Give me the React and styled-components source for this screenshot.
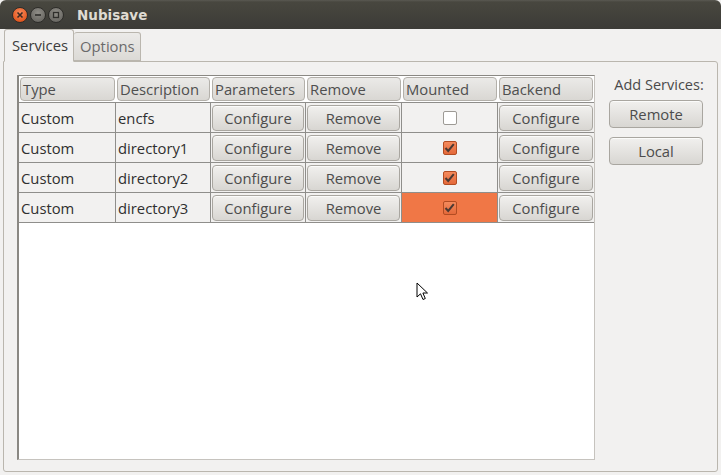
import React from 'react';
import styled, { createGlobalStyle } from 'styled-components';

const GlobalStyle = createGlobalStyle`
    html, body {
        margin: 0;
        padding: 0;
        background: #f2f1f0;
    }
    body {
        font-family: "Open Sans", "DejaVu Sans", sans-serif;
        font-size: 14.8px;
        color: #3c3c3c;
    }
`;

const rows = [
    { type: 'Custom', description: 'encfs', mounted: false },
    { type: 'Custom', description: 'directory1', mounted: true },
    { type: 'Custom', description: 'directory2', mounted: true },
    { type: 'Custom', description: 'directory3', mounted: true, selected: true },
];

const columns = ['Type', 'Description', 'Parameters', 'Remove', 'Mounted', 'Backend'];
const colTemplate = '97px 95px 95px 96px 96px 96px';

const Window = styled.div`
    width: 721px;
    height: 475px;
    display: flex;
    flex-direction: column;
    background: #f2f1f0;
    position: relative;
    overflow: hidden;
`;

const TitleBar = styled.div`
    height: 29px;
    flex: none;
    display: flex;
    align-items: center;
    padding-left: 12px;
    background: linear-gradient(#5a5952 0px, #48473f 2px, #3c3b37 100%);
    border-top-right-radius: 6px;
    border-top-left-radius: 6px;
`;

const Controls = styled.div`
    display: flex;
    gap: 2px;
    margin-right: 13px;
`;

const Circle = styled.div`
    width: 16px;
    height: 16px;
    border-radius: 50%;
    display: flex;
    align-items: center;
    justify-content: center;
    box-sizing: border-box;
    border: 1px solid #2e2d2a;
    background: ${p => (p.close
        ? 'radial-gradient(circle at 50% 35%, #f88a5c, #e35a22 70%, #c2441a)'
        : 'radial-gradient(circle at 50% 35%, #8f8d87, #6d6b66 70%, #5a5954)')};
`;

const Title = styled.div`
    font-family: "DejaVu Sans", sans-serif;
    font-weight: bold;
    font-size: 13.5px;
    color: #dfdbd2;
`;

const Body = styled.div`
    flex: 1;
    display: flex;
    flex-direction: column;
    padding: 1px 3px 3px 3px;
`;

const TabStrip = styled.div`
    display: flex;
    align-items: flex-end;
    padding-left: 1px;
    height: 32px;
    margin-bottom: -1px;
    position: relative;
    z-index: 1;
`;

const Tab = styled.div`
    box-sizing: border-box;
    height: ${p => (p.active ? '33px' : '29px')};
    padding: ${p => (p.active ? '5px 5px 0 7px' : '3px 5px 0 6px')};
    border: 1px solid #bab6ae;
    border-bottom: ${p => (p.active ? '1px solid #f2f1f0' : '1px solid #bab6ae')};
    border-left: ${p => (p.active ? '1px solid #bab6ae' : 'none')};
    border-radius: 3px 3px 0 0;
    background: ${p => (p.active ? '#f2f1f0' : 'linear-gradient(#ebeae8, #dcdad6)')};
    color: ${p => (p.active ? '#3c3c3c' : '#6a6a6a')};
    margin-bottom: ${p => (p.active ? '0' : '1px')};
`;

const Panel = styled.div`
    flex: 1;
    box-sizing: border-box;
    border: 1px solid #bab6ae;
    border-radius: 0 3px 3px 3px;
    display: flex;
    padding: 13px 13px 11px 13px;
    gap: 14px;
`;

const ScrollPane = styled.div`
    width: 578px;
    box-sizing: border-box;
    background: #ffffff;
    border: 1px solid #c6c3be;
    border-top-color: #8a8883;
    border-left: 2px solid #8a8883;
    padding: 1px 0 0 0;
`;

const HeaderRow = styled.div`
    display: grid;
    grid-template-columns: ${colTemplate};
    height: 25px;
`;

const HeaderCell = styled.div`
    margin: 0 1px;
    box-sizing: border-box;
    border: 1px solid #b3b0aa;
    border-radius: 4px;
    background: linear-gradient(#ebeae8, #d9d7d3);
    color: #4f4f4f;
    padding-left: 2px;
    line-height: 22px;
    height: 24px;
    white-space: nowrap;
    overflow: hidden;
`;

const Row = styled.div`
    display: grid;
    grid-template-columns: ${colTemplate};
    width: 575px;
    border-top: 1px solid #8f8e8b;
    border-bottom: ${p => (p.last ? '1px solid #8f8e8b' : 'none')};
    height: 29px;
    background: #f2f1f0;
`;

const Cell = styled.div`
    box-sizing: border-box;
    border-right: 1px solid #8f8e8b;
    display: flex;
    align-items: center;
    justify-content: ${p => (p.center ? 'center' : 'flex-start')};
    padding: ${p => (p.button ? '1px 1px' : '0 0 0 2px')};
    background: ${p => (p.selected ? '#f07746' : 'transparent')};
    color: #2f2f2f;
    &:last-child {
        border-right: none;
    }
`;

const Button = styled.div`
    flex: ${p => (p.fixed ? 'none' : '1')};
    box-sizing: border-box;
    height: ${p => (p.fixed ? '28px' : '26px')};
    display: flex;
    align-items: center;
    justify-content: center;
    border: 1px solid #a9a6a0;
    border-radius: 4px;
    background: linear-gradient(#f1f0ee, #d8d6d2);
    color: #4c4c4c;
    box-shadow: inset 0 1px 0 #fbfbfa;
`;

const CheckBox = styled.div`
    width: 14px;
    height: 14px;
    margin-right: 2px;
    box-sizing: border-box;
    border-radius: 2px;
    border: 1px solid ${p => (p.checked ? '#b24c22' : '#9d9a95')};
    background: ${p => (p.checked ? 'linear-gradient(#f48a5c, #e4693a)' : '#ffffff')};
    display: flex;
    align-items: center;
    justify-content: center;
`;

const Side = styled.div`
    width: 94px;
    display: flex;
    flex-direction: column;
    align-items: stretch;
`;

const SideLabel = styled.div`
    display: flex;
    justify-content: center;
    white-space: nowrap;
    color: #4a4a4a;
    height: 25px;
    line-height: 20px;
    margin: 0 -6px 0 0;
    font-size: 14.5px;
`;

const SideButtons = styled.div`
    display: flex;
    flex-direction: column;
    gap: 9px;
`;

const Cursor = styled.svg`
    position: absolute;
    left: 416px;
    top: 282px;
`;

const Check = () => (
    <svg width="11" height="10" viewBox="0 0 11 10">
        <path d="M1.5 5 L4.2 8 L9.8 1.2" fill="none" stroke="#4b3a34" strokeWidth="2" />
    </svg>
);

const App = () => {
    return (
        <Window>
            <GlobalStyle />
            <TitleBar>
                <Controls>
                    <Circle close>
                        <svg width="8" height="8" viewBox="0 0 8 8">
                            <path d="M1.5 1.5 L6.5 6.5 M6.5 1.5 L1.5 6.5" stroke="#3b2a22" strokeWidth="1.6" />
                        </svg>
                    </Circle>
                    <Circle>
                        <svg width="8" height="8" viewBox="0 0 8 8">
                            <path d="M1 4 L7 4" stroke="#2f2e2b" strokeWidth="1.6" />
                        </svg>
                    </Circle>
                    <Circle>
                        <svg width="8" height="8" viewBox="0 0 8 8">
                            <rect x="1.5" y="1.5" width="5" height="5" fill="none" stroke="#2f2e2b" strokeWidth="1.3" />
                        </svg>
                    </Circle>
                </Controls>
                <Title>Nubisave</Title>
            </TitleBar>
            <Body>
                <TabStrip>
                    <Tab active>Services</Tab>
                    <Tab>Options</Tab>
                </TabStrip>
                <Panel>
                    <ScrollPane>
                        <HeaderRow>
                            {columns.map(col => <HeaderCell key={col}>{col}</HeaderCell>)}
                        </HeaderRow>
                        {rows.map((row, index) => (
                            <Row key={index} last={index === rows.length - 1}>
                                <Cell>{row.type}</Cell>
                                <Cell>{row.description}</Cell>
                                <Cell button><Button>Configure</Button></Cell>
                                <Cell button><Button>Remove</Button></Cell>
                                <Cell center selected={row.selected}>
                                    <CheckBox checked={row.mounted}>{row.mounted && <Check />}</CheckBox>
                                </Cell>
                                <Cell button><Button>Configure</Button></Cell>
                            </Row>
                        ))}
                    </ScrollPane>
                    <Side>
                        <SideLabel>Add Services:</SideLabel>
                        <SideButtons>
                            <Button fixed>Remote</Button>
                            <Button fixed>Local</Button>
                        </SideButtons>
                    </Side>
                </Panel>
            </Body>
            <Cursor width="13" height="20" viewBox="0 0 13 20">
                <path d="M1 1 L1 15 L4.5 11.8 L7 17.5 L9.3 16.5 L6.9 11 L11.5 11 Z" fill="#ffffff" stroke="#000000" strokeWidth="1" strokeLinejoin="round" />
            </Cursor>
        </Window>
    );
};

export default App;
